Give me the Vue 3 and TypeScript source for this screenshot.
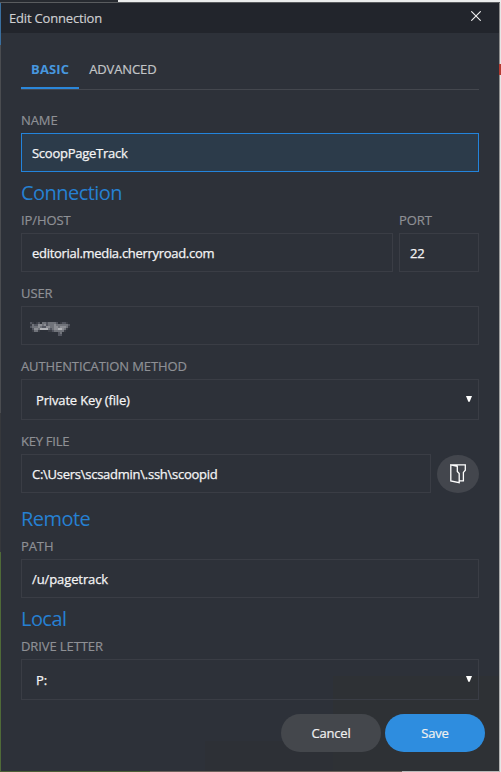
<script setup lang="ts">
import { ref } from 'vue'

const tabs = ['BASIC', 'ADVANCED']
const activeTab = ref('BASIC')

const name = ref('ScoopPageTrack')
const host = ref('editorial.media.cherryroad.com')
const port = ref('22')
const keyFile = ref('C:\\Users\\scsadmin\\.ssh\\scoopid')
const path = ref('/u/pagetrack')

// Brightness levels (0-5) of the masked user name, one digit per 2px cell.
const mask: string[] = [
  '21012033233332012210',
  '13224434233343333332',
  '23334322443344344431',
  '02443555532344554310',
  '01331000011233333100',
  '00000000000000230000',
  '00000000000000220000',
]
const cells = mask.flatMap((row, y) =>
  [...row].map((v, x) => ({ x: x * 2, y: y * 2, level: Number(v) })).filter((c) => c.level > 0),
)
</script>

<template>
  <div class="desktop">
    <div class="window">
      <header class="titlebar">
        <span class="title">Edit Connection</span>
        <svg class="close" width="10" height="10" viewBox="0 0 10 10">
          <path d="M0.3 0.3 9.7 9.7M9.7 0.3 0.3 9.7" />
        </svg>
      </header>

      <main class="content">
        <nav class="tabs">
          <div
            v-for="t in tabs"
            :key="t"
            class="tab"
            :class="{ active: t === activeTab }"
            @click="activeTab = t"
          >{{ t }}</div>
        </nav>

        <div class="field first">
          <div class="label">NAME</div>
          <div class="input focused">{{ name }}</div>
        </div>

        <h2 class="heading">Connection</h2>
        <div class="row">
          <div class="field grow">
            <div class="label">IP/HOST</div>
            <div class="input host">{{ host }}</div>
          </div>
          <div class="field port">
            <div class="label">PORT</div>
            <div class="input">{{ port }}</div>
          </div>
        </div>

        <div class="field gap">
          <div class="label">USER</div>
          <div class="input user">
            <svg class="mask" width="40" height="14" viewBox="0 0 40 14" shape-rendering="crispEdges">
              <rect
                v-for="c in cells"
                :key="c.x + '-' + c.y"
                :x="c.x"
                :y="c.y"
                width="2"
                height="2"
                :class="'l' + c.level"
              />
            </svg>
          </div>
        </div>

        <div class="field gap">
          <div class="label">AUTHENTICATION METHOD</div>
          <div class="input select">
            <span>Private Key (file)</span>
            <svg class="arrow" width="6" height="6" viewBox="0 0 6 6"><path d="M0 0H6L3.7 5.8H2.3Z" /></svg>
          </div>
        </div>

        <div class="field gap">
          <div class="label keylabel">KEY FILE</div>
          <div class="row">
            <div class="input grow keyfile">{{ keyFile }}</div>
            <div class="browse">
              <svg width="17" height="20" viewBox="0 0 17 20">
                <path d="M0.8 0.8 7.3 2.3V7.5L9.2 9.6V18.6L0.8 16.9ZM0.8 0.8H15.3V6.2L13.4 8.4V16.9H9.2" />
              </svg>
            </div>
          </div>
        </div>

        <h2 class="heading spaced">Remote</h2>
        <div class="field">
          <div class="label">PATH</div>
          <div class="input path">{{ path }}</div>
        </div>

        <h2 class="heading">Local</h2>
        <div class="field">
          <div class="label">DRIVE LETTER</div>
          <div class="input select">
            <span>P:</span>
            <svg class="arrow" width="6" height="6" viewBox="0 0 6 6"><path d="M0 0H6L3.7 5.8H2.3Z" /></svg>
          </div>
        </div>
      </main>

      <footer class="actions">
        <div class="button">Cancel</div>
        <div class="button primary">Save</div>
      </footer>
    </div>
  </div>
</template>

<style>
body {
  margin: 0;
}
</style>

<style scoped>
.desktop {
  box-sizing: border-box;
  width: 501px;
  height: 772px;
  padding: 3px 2px 1px 1px;
  overflow: hidden;
  font-family: 'Open Sans', 'Noto Sans', sans-serif;
  font-size: 13px;
  background:
    linear-gradient(#5a5c5f, #5a5c5f) 0 2px / 500px 1px no-repeat,
    linear-gradient(90deg, #272a30 0 118px, #eceded 118px) 0 0 / 501px 3px no-repeat,
    linear-gradient(#b43a30, #b43a30) 499px 64px / 2px 11px no-repeat,
    linear-gradient(#8c8c8c, #b5b5b5) 499px 3px / 1px 769px no-repeat,
    linear-gradient(#e6e6e6, #e6e6e6) 500px 3px / 1px 769px no-repeat,
    linear-gradient(90deg, #4c6038 0 150px, #6b625b 150px 402px, #b9b9b9 402px) 0 771px / 501px 1px no-repeat,
    linear-gradient(#3a6f9f 0 42px, #4a4c50 42px 410px, #36383c 410px 549px, #4f6a38 549px) 0 3px / 1px 769px no-repeat,
    #2d3038;
}
.window {
  display: flex;
  flex-direction: column;
  height: 768px;
  background:
    linear-gradient(#2e3135, #2e3135) 332px 673px / 166px 95px no-repeat,
    linear-gradient(#2d3036, #2d3036) 204px 738px / 128px 30px no-repeat,
    #2d3139;
}
.titlebar {
  display: flex;
  justify-content: space-between;
  height: 30px;
  box-sizing: border-box;
  padding: 0 18px 0 8px;
  background: #22252c;
}
.title {
  color: #cfd0d2;
  line-height: 31px;
  letter-spacing: -0.18px;
  -webkit-text-stroke: 0.15px;
}
.close {
  margin-top: 8px;
}
.close path {
  stroke: #f2f2f2;
  stroke-width: 1.1;
}
.content {
  padding: 0 20px;
}
.tabs {
  display: flex;
  height: 56px;
  align-items: flex-end;
  border-bottom: 1px solid #44474e;
}
.tab {
  height: 35px;
  padding: 0 10px;
  line-height: 31px;
  box-sizing: border-box;
  color: #c3c5c8;
  letter-spacing: -0.12px;
  -webkit-text-stroke: 0.2px;
}
.tab.active {
  color: #4797df;
  font-weight: 700;
  letter-spacing: 0.15px;
  border-bottom: 2px solid #2b87da;
  -webkit-text-stroke: 0;
}
.field.first {
  margin-top: 21px;
}
.field.gap {
  margin-top: 12px;
}
.label {
  height: 18px;
  margin-bottom: 4px;
  line-height: 18px;
  color: #8e9095;
  white-space: nowrap;
  letter-spacing: -0.1px;
  -webkit-text-stroke: 0.2px;
}
.label.keylabel {
  letter-spacing: -0.25px;
}
.input {
  box-sizing: border-box;
  height: 39px;
  padding: 0 10px;
  line-height: 38px;
  border: 1px solid #3a3d45;
  color: #f4f4f5;
  white-space: nowrap;
  letter-spacing: -0.26px;
  -webkit-text-stroke: 0.25px;
}
.input.host {
  letter-spacing: -0.3px;
}
.input.path {
  letter-spacing: -0.1px;
}
.input.focused {
  border-color: #2384dc;
  background: #2c3b4a;
}
.input.select {
  display: flex;
  justify-content: space-between;
  height: 41px;
  padding: 0 6px 0 14px;
  line-height: 41px;
  letter-spacing: -0.15px;
}
.arrow {
  margin-top: 16px;
  fill: #fff;
}
.input.user {
  padding-left: 8px;
}
.mask {
  display: block;
  margin-top: 15px;
}
.l1 { fill: #3b3e46; }
.l2 { fill: #535660; }
.l3 { fill: #70737a; }
.l4 { fill: #8b8d93; }
.l5 { fill: #b0b2b6; }
.row {
  display: flex;
  gap: 6px;
}
.grow {
  flex: 1;
}
.port {
  width: 80px;
}
.heading {
  margin: 0;
  height: 39px;
  line-height: 42px;
  font-size: 20px;
  font-weight: 400;
  color: #2680d2;
  letter-spacing: -0.55px;
}
.heading.spaced {
  margin-top: 5px;
}
.browse {
  display: flex;
  align-items: center;
  justify-content: center;
  width: 42px;
  height: 38px;
  margin-top: 1px;
  border-radius: 50%;
  background: #43464d;
}
.browse path {
  fill: none;
  stroke: #fff;
  stroke-width: 1.3;
}
.actions {
  display: flex;
  justify-content: flex-end;
  gap: 4px;
  margin-top: 14px;
  padding-right: 14px;
}
.button {
  width: 100px;
  height: 38px;
  border-radius: 19px;
  background: #44474c;
  color: #f0f0f0;
  line-height: 38px;
  text-align: center;
  letter-spacing: -0.2px;
  -webkit-text-stroke: 0.2px;
}
.button.primary {
  background: #2e8ddf;
}
</style>
